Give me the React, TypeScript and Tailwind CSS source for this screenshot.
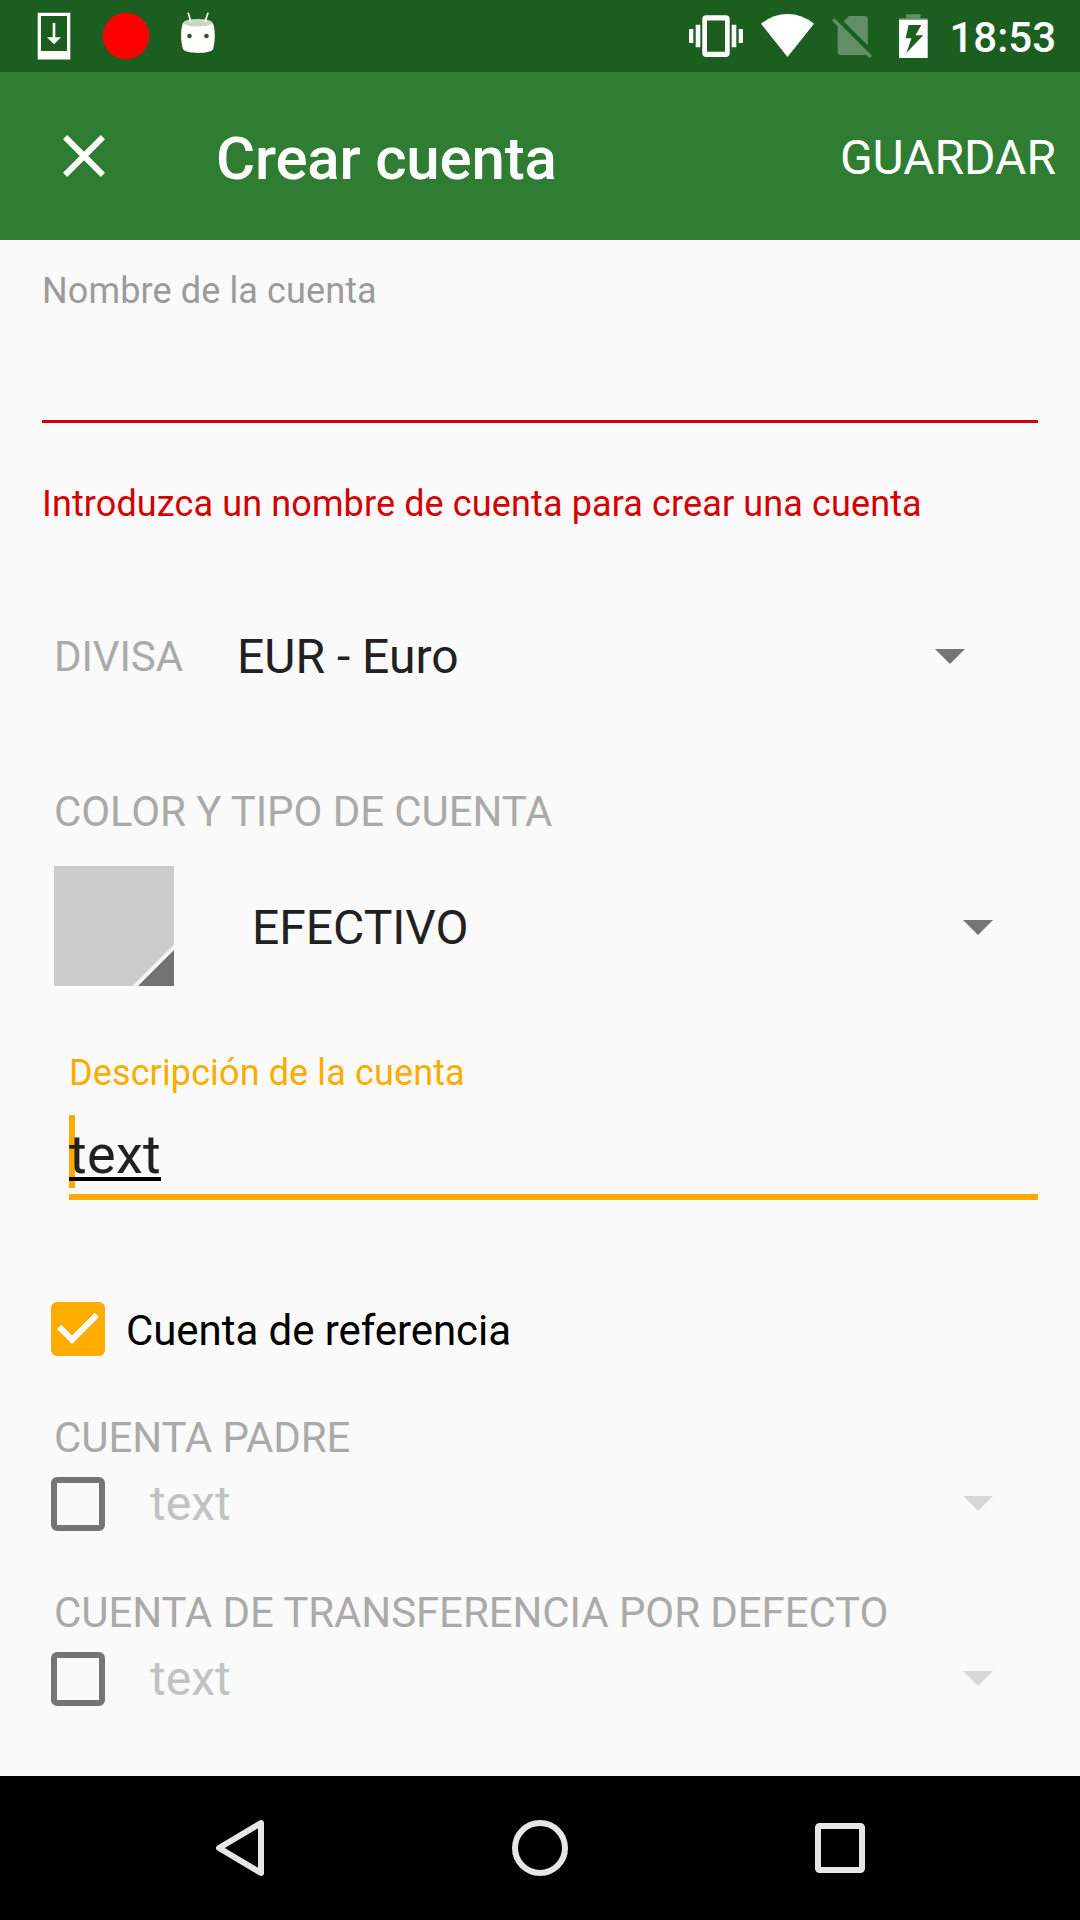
import type { ReactNode } from "react";

function Caret({ className }: { className: string }) {
  return (
    <svg className={`h-[15px] w-[30px] shrink-0 ${className}`} viewBox="0 0 30 15" fill="currentColor">
      <path d="M0 0H30L15 15Z" />
    </svg>
  );
}

function StatusBar() {
  return (
    <div className="flex h-[72px] items-start bg-[#1b5e20] text-white">
      <svg className="ml-[37px] h-[72px] w-[34px]" viewBox="37 0 34 72" fill="currentColor">
        <path fillRule="evenodd" d="M37.7 12.7H70.3V59.5H37.7ZM41 16V51H67V16Z" />
        <path d="M52.7 23H55.3V37.3H61L54 44.3L47 37.3H52.7Z" />
      </svg>
      <svg className="ml-[31px] h-[72px] w-[48px]" viewBox="102 0 48 72">
        <circle cx="126" cy="36" r="23.2" fill="#ff0000" />
      </svg>
      <svg className="ml-[30px] h-[72px] w-[36px]" viewBox="180 0 36 72" fill="currentColor">
        <path d="M188.3 13.3L190.6 21M207.9 13.3L205.2 21" stroke="currentColor" strokeWidth="1.7" strokeLinecap="round" />
        <path d="M183.3 22.5C188 27.3 208 27.3 212.4 22.5C215.5 27 215.6 42 212.9 49.5C210 54 186.500 54 183.200 49.500C180.300 42 180.500 27 183.300 22.500Z" />
        <ellipse cx="197.800" cy="22.700" rx="14.400" ry="3.700" fill="#c6d7c7" />
        <path d="M189.900 20L190.600 21.300M205.900 20L205.200 21.300" stroke="currentColor" strokeWidth="1.700" strokeLinecap="round" />
        <circle cx="189.500" cy="36" r="2.300" fill="#1b5e20" />
        <circle cx="206.500" cy="36" r="2.300" fill="#1b5e20" />
      </svg>
      <svg className="ml-auto h-[72px] w-[56px]" viewBox="688 0 56 72" fill="currentColor">
        <path d="M689 29H693.300V43H689ZM695.700 24.700H700.300V47.200H695.700ZM731.700 24.700H736.300V47.200H731.700ZM738.700 29H743V43H738.700Z" />
        <path fillRule="evenodd" d="M706 15.300H726A3.600 3.600 0 0 1 729.700 19V53.300A3.600 3.600 0 0 1 726 57H706A3.600 3.600 0 0 1 702.300 53.300V19A3.600 3.600 0 0 1 706 15.300ZM707 20.500V51.700H725V20.500Z" />
      </svg>
      <svg className="ml-[16px] h-[72px] w-[55px]" viewBox="760 0 55 72" fill="currentColor">
        <path d="M787.500 57L761 23.800Q773 14 787.500 14T814 23.800Z" />
      </svg>
      <svg className="ml-[16px] h-[72px] w-[42px]" viewBox="831 0 42 72" fill="#628f66">
        <path d="M849 16H864.500A3.300 3.300 0 0 1 867.800 19.300V45.200L843.600 21.200Z" />
        <path d="M834.500 18.300L872 55.700L869.500 58L866 54.500Q865 55 864 55H841A3.300 3.300 0 0 1 837.700 51.700V26.200L832 20.800Z" />
      </svg>
      <svg className="ml-[25px] h-[72px] w-[32px]" viewBox="898 0 32 72" fill="currentColor">
        <path d="M899 20V18.300H906.200V14.300H920.500V18.300H927.700V20Z" fill="#628f66" />
        <path d="M899 19.700H927.700V58H899Z" />
        <path d="M908.500 25H921.300L915.500 35.300H923.300L906.300 53L911.500 38.300H905.700Z" fill="#1b5e20" />
      </svg>
      <span className="mr-[24px] ml-[19px] pt-[13px] text-[42px] leading-[50px] font-medium">18:53</span>
    </div>
  );
}

function AppBar() {
  return (
    <header className="flex h-[168px] items-center bg-[#2e7d32] text-white">
      <svg className="ml-12 size-[72px]" viewBox="0 0 24 24" fill="currentColor">
        <path d="M19 6.410L17.590 5 12 10.590 6.410 5 5 6.410 10.590 12 5 17.590 6.410 19 12 13.410 17.590 19 19 17.590 13.410 12z" />
      </svg>
      <h1 className="ml-24 pt-[6px] text-[60px] leading-[70px] font-medium tracking-[-0.2px]">Crear cuenta</h1>
      <button className="mr-6 ml-auto pt-[3px] text-[48px] leading-[56px]">GUARDAR</button>
    </header>
  );
}

function SectionLabel({ children, className = "" }: { children: ReactNode; className?: string }) {
  return <div className={`text-[42px] leading-[50px] tracking-[-0.09px] text-[#aaaaaa] ${className}`}>{children}</div>;
}

function OptionalAccount({ label }: { label: string }) {
  return (
    <section className="mt-[57px]">
      <SectionLabel className="ml-[54px]">{label}</SectionLabel>
      <div className="mt-[14px] flex h-[54px] items-center">
        <span className="ml-[51px] size-[54px] rounded-[6px] border-[6px] border-[#757575]" />
        <span className="ml-[45px] text-[48px] leading-[56px] text-[#c2c2c2]">text</span>
        <Caret className="mr-[87px] mb-px ml-auto text-[#d7d7d7]" />
      </div>
    </section>
  );
}

function NavBar() {
  return (
    <nav className="flex h-[144px] items-center justify-center gap-[228px] bg-black text-[#e6e6e6]">
      <svg className="size-[72px]" viewBox="204 1812 72 72" fill="none" stroke="currentColor" strokeWidth="6" strokeLinejoin="round">
        <path d="M261 1823V1873L219 1848Z" />
      </svg>
      <svg className="size-[72px]" viewBox="504 1812 72 72" fill="none" stroke="currentColor" strokeWidth="6">
        <circle cx="540" cy="1848" r="25" />
      </svg>
      <svg className="size-[72px]" viewBox="804 1812 72 72" fill="none" stroke="currentColor" strokeWidth="6">
        <rect x="818" y="1826" width="44" height="44" rx="1.500" />
      </svg>
    </nav>
  );
}

export default function App() {
  return (
    <div className="flex h-[1920px] w-[1080px] flex-col overflow-hidden bg-[#fafafa] font-['Roboto',sans-serif]">
      <StatusBar />
      <AppBar />
      <main className="flex flex-1 flex-col pt-[30px]">
        <section className="mx-[42px]">
          <div className="text-[36px] leading-[42px] tracking-[0.12px] text-[#9b9b9b]">Nombre de la cuenta</div>
          <div className="h-[111px] border-b-[3px] border-[#d50000]" />
          <div className="mt-[60px] text-[36px] leading-[42px] tracking-[0.12px] text-[#d50000]">
            Introduzca un nombre de cuenta para crear una cuenta
          </div>
        </section>

        <section className="mt-[104px] flex h-[56px] items-center">
          <SectionLabel className="ml-[54px] w-[183px]">DIVISA</SectionLabel>
          <span className="text-[48px] leading-[56px] text-[#212121]">EUR - Euro</span>
          <Caret className="mr-[115px] mb-px ml-auto text-[#757575]" />
        </section>

        <section className="mt-[102px]">
          <SectionLabel className="ml-[54px]">COLOR Y TIPO DE CUENTA</SectionLabel>
          <div className="mt-[29px] flex h-[120px] items-center">
            <svg className="ml-[54px] size-[120px] bg-[#cccccc]" viewBox="0 0 120 120">
              <path d="M120 78.500V120H78.500Z" fill="#f5f5f5" />
              <path d="M120 84V120H84Z" fill="#727272" />
            </svg>
            <span className="ml-[78px] pt-[3px] text-[48px] leading-[56px] text-[#212121]">EFECTIVO</span>
            <div className="mr-[87px] ml-auto pt-[3px]">
              <Caret className="text-[#757575]" />
            </div>
          </div>
        </section>

        <section className="mt-[66px] mr-[42px] ml-[69px]">
          <div className="text-[36px] leading-[42px] tracking-[0.12px] text-[#ffab00]">Descripción de la cuenta</div>
          <div className="relative h-[106px] border-b-[6px] border-[#ffab00] pt-[29px]">
            <span className="absolute top-[21px] left-0 h-[73px] w-[6px] bg-[#ffab00]" />
            <span className="relative block w-fit text-[54px] leading-[64px] tracking-[0.3px] text-[#212121] underline decoration-black decoration-[3.500px] underline-offset-[4px] [text-decoration-skip-ink:none]">
              text
            </span>
          </div>
        </section>

        <section className="mt-[102px] flex h-[54px] items-center">
          <svg className="ml-[51px] size-[54px]" viewBox="3 3 18 18">
            <rect x="3" y="3" width="18" height="18" rx="2" fill="#ffab00" />
            <path d="M10 17L5 12L6.410 10.580L10 14.170L17.590 6.580L19 8Z" fill="#fafafa" />
          </svg>
          <span className="ml-[21px] pt-[3px] text-[42px] leading-[50px] tracking-[-0.06px] text-black">Cuenta de referencia</span>
        </section>

        <OptionalAccount label="CUENTA PADRE" />
        <OptionalAccount label="CUENTA DE TRANSFERENCIA POR DEFECTO" />
      </main>
      <NavBar />
    </div>
  );
}
